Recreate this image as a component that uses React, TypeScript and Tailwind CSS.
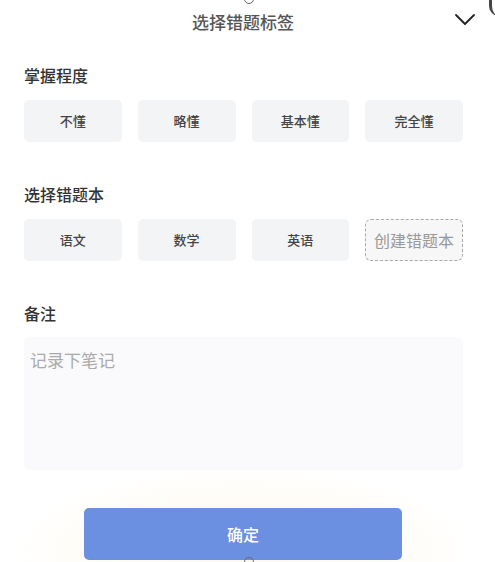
import React from "react";

const levels = ["不懂", "略懂", "基本懂", "完全懂"];
const books = ["语文", "数学", "英语"];

const font = { fontFamily: '"Noto Sans CJK SC", "Noto Sans", sans-serif' };

const Chip = ({ label }: { label: string }) => (
  <button className="h-[42px] rounded-[5px] bg-[#f3f4f6] text-[13px] font-medium text-[#444] flex items-center justify-center">
    {label}
  </button>
);

const App = () => {
  return (
    <div
      className="relative w-[495px] h-[562px] bg-white overflow-hidden"
      style={font}
    >
      {/* little handle circles from the sheet edges */}
      <div className="absolute left-[244px] top-[-6px] w-[10px] h-[10px] rounded-full border border-[#666]" />
      <div className="absolute left-[244px] top-[557px] w-[10px] h-[10px] rounded-full border border-[#666]" />
      <div className="absolute right-[-14px] top-[-20px] w-[20px] h-[36px] rounded-full border-l-[3px] border-[#444]" />

      <div className="h-[42px] grid grid-cols-[60px_1fr_60px] items-center">
        <div />
        <h4 className="text-center text-[17px] font-medium text-[#555] leading-none pr-[9px]">
          选择错题标签
        </h4>
        <button className="flex justify-end pr-[19px] pb-[2px]">
          <svg width="22" height="14" viewBox="0 0 22 14" fill="none">
            <path
              d="M2 2L11 11L20 2"
              stroke="#222"
              strokeWidth="1.8"
              strokeLinecap="round"
              strokeLinejoin="round"
            />
          </svg>
        </button>
      </div>

      <div className="px-6">
        <h2 className="mt-[21px] h-6 leading-6 text-[16px] font-medium text-[#333]">
          掌握程度
        </h2>
        <div className="mt-[13px] grid grid-cols-4 gap-4 w-[439px]">
          {levels.map((l) => (
            <Chip key={l} label={l} />
          ))}
        </div>

        <h2 className="mt-[40px] h-6 leading-6 text-[16px] font-medium text-[#333]">
          选择错题本
        </h2>
        <div className="mt-[13px] grid grid-cols-4 gap-4 w-[439px]">
          {books.map((b) => (
            <Chip key={b} label={b} />
          ))}
          <button className="h-[42px] rounded-[6px] border-[1.5px] border-dashed border-[#aaa] bg-[#f7f7f8] text-[16px] text-[#999] flex items-center justify-center">
            创建错题本
          </button>
        </div>

        <h2 className="mt-[40px] h-6 leading-6 text-[16px] font-medium text-[#333]">
          备注
        </h2>
        <textarea
          className="mt-3 block w-[439px] h-[133px] resize-none rounded-[6px] bg-[#fafafc] px-[6px] py-[10px] text-[17px] text-[#333] placeholder:text-[#aaa] outline-none"
          placeholder="记录下笔记"
        />

        <div className="mt-[2px] w-[439px] h-[90px] rounded-t-[40px] bg-[radial-gradient(ellipse_at_50%_90%,#fff8e8_0%,#fffcf5_45%,#ffffff_75%)] pt-[36px] px-[60px]">
          <button className="w-[318px] h-[52px] rounded-[5px] bg-[#6b90e1] text-[16px] font-medium text-white flex items-center justify-center">
            确定
          </button>
        </div>
      </div>
    </div>
  );
};

export default App;
